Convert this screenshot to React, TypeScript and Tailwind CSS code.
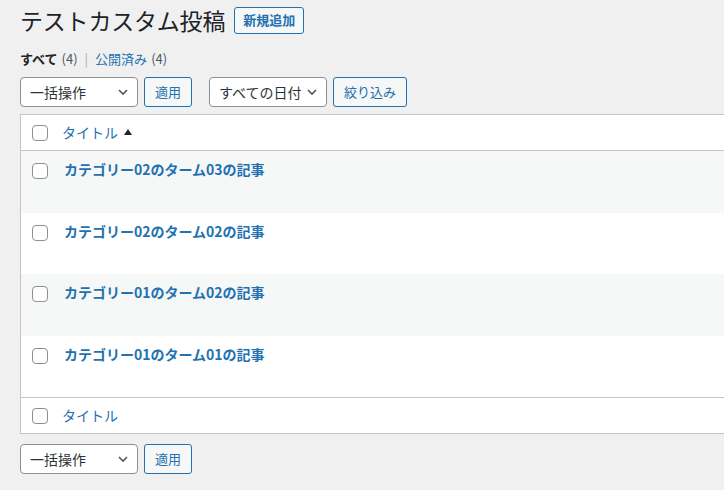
import React from "react";

const font = { fontFamily: '"Noto Sans CJK JP", "Noto Sans", sans-serif' };

function Chevron() {
  return (
    <svg width="16" height="16" viewBox="0 0 20 20" className="text-[#50575e]">
      <path d="M5 7.5 L10 12.5 L15 7.5" fill="none" stroke="currentColor" strokeWidth="2" />
    </svg>
  );
}

function Select({ label, w }: { label: string; w: string }) {
  return (
    <div className={`${w} h-[30px] border border-[#8c8f94] rounded-[4px] bg-white flex items-center justify-between pl-[9px] pr-[6px] text-[14px] text-[#2c3338]`}>
      <span>{label}</span>
      <Chevron />
    </div>
  );
}

function Btn({ label }: { label: string }) {
  return (
    <div className="h-[30px] px-[10px] border border-[#2271b1] rounded-[3px] bg-[#f6f7f7] flex items-center text-[13px] text-[#2271b1]">
      {label}
    </div>
  );
}

function Check() {
  return <div className="w-4 h-4 border border-[#8c8f94] rounded-[4px] bg-white shrink-0" />;
}

const rows = [
  "カテゴリー02のターム03の記事",
  "カテゴリー02のターム02の記事",
  "カテゴリー01のターム02の記事",
  "カテゴリー01のターム01の記事",
];

export default function App() {
  return (
    <div className="w-[724px] h-[490px] bg-[#f0f0f1] overflow-hidden" style={font}>
      <div className="pl-5">
        <div className="flex items-center pt-[5px] h-[35px]">
          <h1 className="text-[23px] leading-[30px] text-[#1d2327] font-normal tracking-[-0.2px]">テストカスタム投稿</h1>
          <div className="ml-[9px] h-[27px] px-[8px] border border-[#2271b1] rounded-[3px] bg-[#f6f7f7] flex items-center text-[13px] font-bold text-[#2271b1]">
            新規追加
          </div>
        </div>
        <div className="mt-[12px] h-[24px] flex items-center text-[13px] text-[#50575e]">
          <span className="font-bold text-[#1d2327]">すべて</span>
          <span className="ml-[4px]">(4)</span>
          <span className="mx-[7px] text-[#a7aaad]">|</span>
          <span className="text-[#2271b1]">公開済み</span>
          <span className="ml-[4px]">(4)</span>
        </div>
        <div className="mt-[6px] flex items-center">
          <Select label="一括操作" w="w-[118px]" />
          <div className="ml-[6px]"><Btn label="適用" /></div>
          <div className="ml-[17px]"><Select label="すべての日付" w="w-[118px]" /></div>
          <div className="ml-[6px]"><Btn label="絞り込み" /></div>
        </div>
        <div className="mt-[7px] w-[740px] border border-[#c3c4c7] bg-white">
          <div className="h-[36px] flex items-center pl-[11px] border-b border-[#c3c4c7]">
            <Check />
            <span className="ml-[14px] text-[14px] text-[#2271b1]">タイトル</span>
            <svg width="10" height="10" viewBox="0 0 10 10" className="ml-[5px] mb-[2px]">
              <path d="M1 8 L5 2 L9 8 Z" fill="#1d2327" />
            </svg>
          </div>
          {rows.map((r, i) => (
            <div key={i} className={`h-[61.5px] flex items-start pl-[11px] pt-[11px] ${i % 2 === 0 ? "bg-[#f6f7f7]" : "bg-white"}`}>
              <div className="mt-[1px]"><Check /></div>
              <span className="ml-[16px] -mt-[2px] text-[14px] font-bold text-[#2271b1] leading-[18px]">{r}</span>
            </div>
          ))}
          <div className="h-[36px] flex items-center pl-[11px] border-t border-[#c3c4c7]">
            <Check />
            <span className="ml-[14px] text-[14px] text-[#2271b1]">タイトル</span>
          </div>
        </div>
        <div className="mt-[10px] flex items-center">
          <Select label="一括操作" w="w-[118px]" />
          <div className="ml-[6px]"><Btn label="適用" /></div>
        </div>
      </div>
    </div>
  );
}
